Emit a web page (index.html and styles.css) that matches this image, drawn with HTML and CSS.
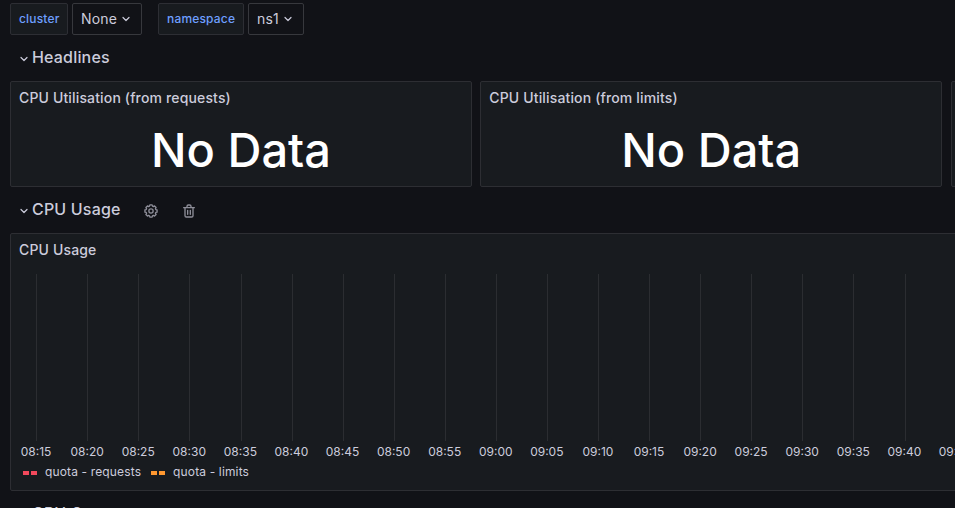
FILE: index.html
```
<!DOCTYPE html>
<html lang="en">
<head>
<meta charset="utf-8">
<title>Dashboard</title>
<link rel="stylesheet" href="styles.css">
</head>
<body>
<div class="variables">
  <div class="variable"><label class="var-label">cluster</label><button class="var-value w-none">None<svg class="chev" viewBox="0 0 10 10"><path d="M2 3.5 5 6.5 8 3.5"/></svg></button></div>
  <div class="variable"><label class="var-label wide">namespace</label><button class="var-value w-ns">ns1<svg class="chev" viewBox="0 0 10 10"><path d="M2 3.5 5 6.5 8 3.5"/></svg></button></div>
</div>
<div class="row-head"><svg class="chev" viewBox="0 0 10 10"><path d="M2 3.5 5 6.5 8 3.5"/></svg><h2>Headlines</h2></div>
<div class="stats">
  <section class="panel stat"><h3>CPU Utilisation (from requests)</h3><div class="value">No Data</div></section>
  <section class="panel stat"><h3>CPU Utilisation (from limits)</h3><div class="value">No Data</div></section>
  <section class="panel stat"></section>
</div>
<div class="row-head"><svg class="chev" viewBox="0 0 10 10"><path d="M2 3.5 5 6.5 8 3.5"/></svg><h2>CPU Usage</h2>
  <svg class="action cog" viewBox="-12 -12 24 24"><path d="M9.1-1.7V1.7L7.2 2.2 6.65 3.54 7.64 5.23 5.23 7.64 3.54 6.65 2.2 7.2 1.7 9.1H-1.7L-2.2 7.2-3.54 6.65-5.23 7.64-7.64 5.23-6.65 3.54-7.2 2.2-9.1 1.7V-1.7L-7.2-2.2-6.65-3.54-7.64-5.23-5.23-7.64-3.54-6.65-2.2-7.2-1.7-9.1H1.7L2.2-7.2 3.54-6.65 5.23-7.64 7.64-5.23 6.65-3.54 7.2-2.2Z"/><circle r="3.2"/></svg>
  <svg class="action trash" viewBox="0 0 24 24"><path d="M10,18a1,1,0,0,0,1-1V11a1,1,0,0,0-2,0v6A1,1,0,0,0,10,18ZM20,6H16V5a3,3,0,0,0-3-3H11A3,3,0,0,0,8,5V6H4A1,1,0,0,0,4,8H5V19a3,3,0,0,0,3,3h8a3,3,0,0,0,3-3V8h1a1,1,0,0,0,0-2ZM10,5a1,1,0,0,1,1-1h2a1,1,0,0,1,1,1V6H10Zm7,14a1,1,0,0,1-1,1H8a1,1,0,0,1-1-1V8H17Zm-3-1a1,1,0,0,0,1-1V11a1,1,0,0,0-2,0v6A1,1,0,0,0,14,18Z"/></svg>
</div>
<section class="panel graph">
  <h3>CPU Usage</h3>
  <div class="plot">
    <div class="tick">08:15</div><div class="tick">08:20</div><div class="tick">08:25</div><div class="tick">08:30</div><div class="tick">08:35</div><div class="tick">08:40</div><div class="tick">08:45</div><div class="tick">08:50</div><div class="tick">08:55</div><div class="tick">09:00</div><div class="tick">09:05</div><div class="tick">09:10</div><div class="tick">09:15</div><div class="tick">09:20</div><div class="tick">09:25</div><div class="tick">09:30</div><div class="tick">09:35</div><div class="tick">09:40</div><div class="tick">09:45</div>
  </div>
  <div class="legend">
    <span class="series"><i class="dash red"></i>quota - requests</span>
    <span class="series"><i class="dash orange"></i>quota - limits</span>
  </div>
</section>
<div class="row-head last"><svg class="chev" viewBox="0 0 10 10"><path d="M2 3.5 5 6.5 8 3.5"/></svg><h2>CPU Quota</h2></div>
</body>
</html>
```
FILE: styles.css
```
* { box-sizing: border-box; }
html, body { height: 508px; overflow: hidden; }
body {
  margin: 0;
  padding: 3px 0 0 10px;
  background: #111217;
  color: #ccccdc;
  font-family: Inter, "Liberation Sans", sans-serif;
  font-size: 14px;
  letter-spacing: 0.15px;
}
h2, h3 { margin: 0; font-weight: 500; white-space: nowrap; }
.variables { display: flex; gap: 16px; height: 32px; }
.variable { display: flex; gap: 4px; }
.var-label {
  width: 58px;
  padding-left: 8px;
  border: 1px solid #2d2e34;
  border-radius: 2px;
  background: #181b1f;
  color: #6e9fff;
  font-size: 12px;
  font-weight: 500;
  line-height: 30px;
  letter-spacing: 0.18px;
}
.var-label.wide { width: 86px; }
.var-value {
  display: flex;
  align-items: center;
  gap: 4px;
  padding: 0 0 2px 8px;
  border: 1px solid #37383d;
  border-radius: 2px;
  background: #111217;
  color: #ccccdc;
  font: inherit;
  letter-spacing: inherit;
}
.var-value .chev { margin-top: 2px; }
.w-none { width: 70px; }
.w-ns { width: 56px; }
.chev { width: 10px; height: 10px; flex: none; fill: none; stroke: #ccccdc; stroke-width: 1.2; stroke-linecap: round; stroke-linejoin: round; }
.row-head { display: flex; align-items: center; height: 46px; padding: 0 0 2px 9px; }
.row-head .chev { margin-top: 3px; }
.row-head h2 { margin-left: 3px; font-size: 16px; line-height: 22px; letter-spacing: 0.18px; }
.action { width: 16px; height: 16px; margin-top: 4px; }
.cog { margin-left: 22px; fill: none; stroke: #8e8e99; stroke-width: 2; stroke-linejoin: round; }
.trash { margin-left: 22px; fill: #8e8e99; }
.panel { border: 1px solid #2d2e33; border-radius: 2px; background: #181b1f; }
.panel h3 { padding-left: 8px; font-size: 14px; line-height: 32px; }
.stats { display: flex; gap: 8.3px; }
.stat { flex: none; width: 462px; height: 106px; }
.value { color: #fff; font-size: 47px; font-weight: 500; line-height: 72px; text-align: center; letter-spacing: 0; }
.graph { height: 258px; width: 1403px; }
.plot { display: flex; height: 188px; margin-top: 8px; }
.tick { display: flex; flex: none; flex-direction: column; align-items: center; gap: 1px; width: 51.08px; padding-right: 1px; font-size: 12px; line-height: 20px; letter-spacing: 0; }
.tick::before { content: ""; flex: none; width: 1px; height: 167px; margin-left: 1.4px; background: #2b2d31; }
.legend { display: flex; gap: 10px; padding-left: 12px; font-size: 12px; line-height: 20px; letter-spacing: 0.14px; }
.series { display: flex; align-items: center; gap: 8px; }
.dash { width: 14px; height: 4px; margin-top: 2px; }
.red { background: linear-gradient(90deg, #f2495c 6px, transparent 6px 8px, #f2495c 8px); }
.orange { background: linear-gradient(90deg, #ff9830 6px, transparent 6px 8px, #ff9830 8px); }
```
